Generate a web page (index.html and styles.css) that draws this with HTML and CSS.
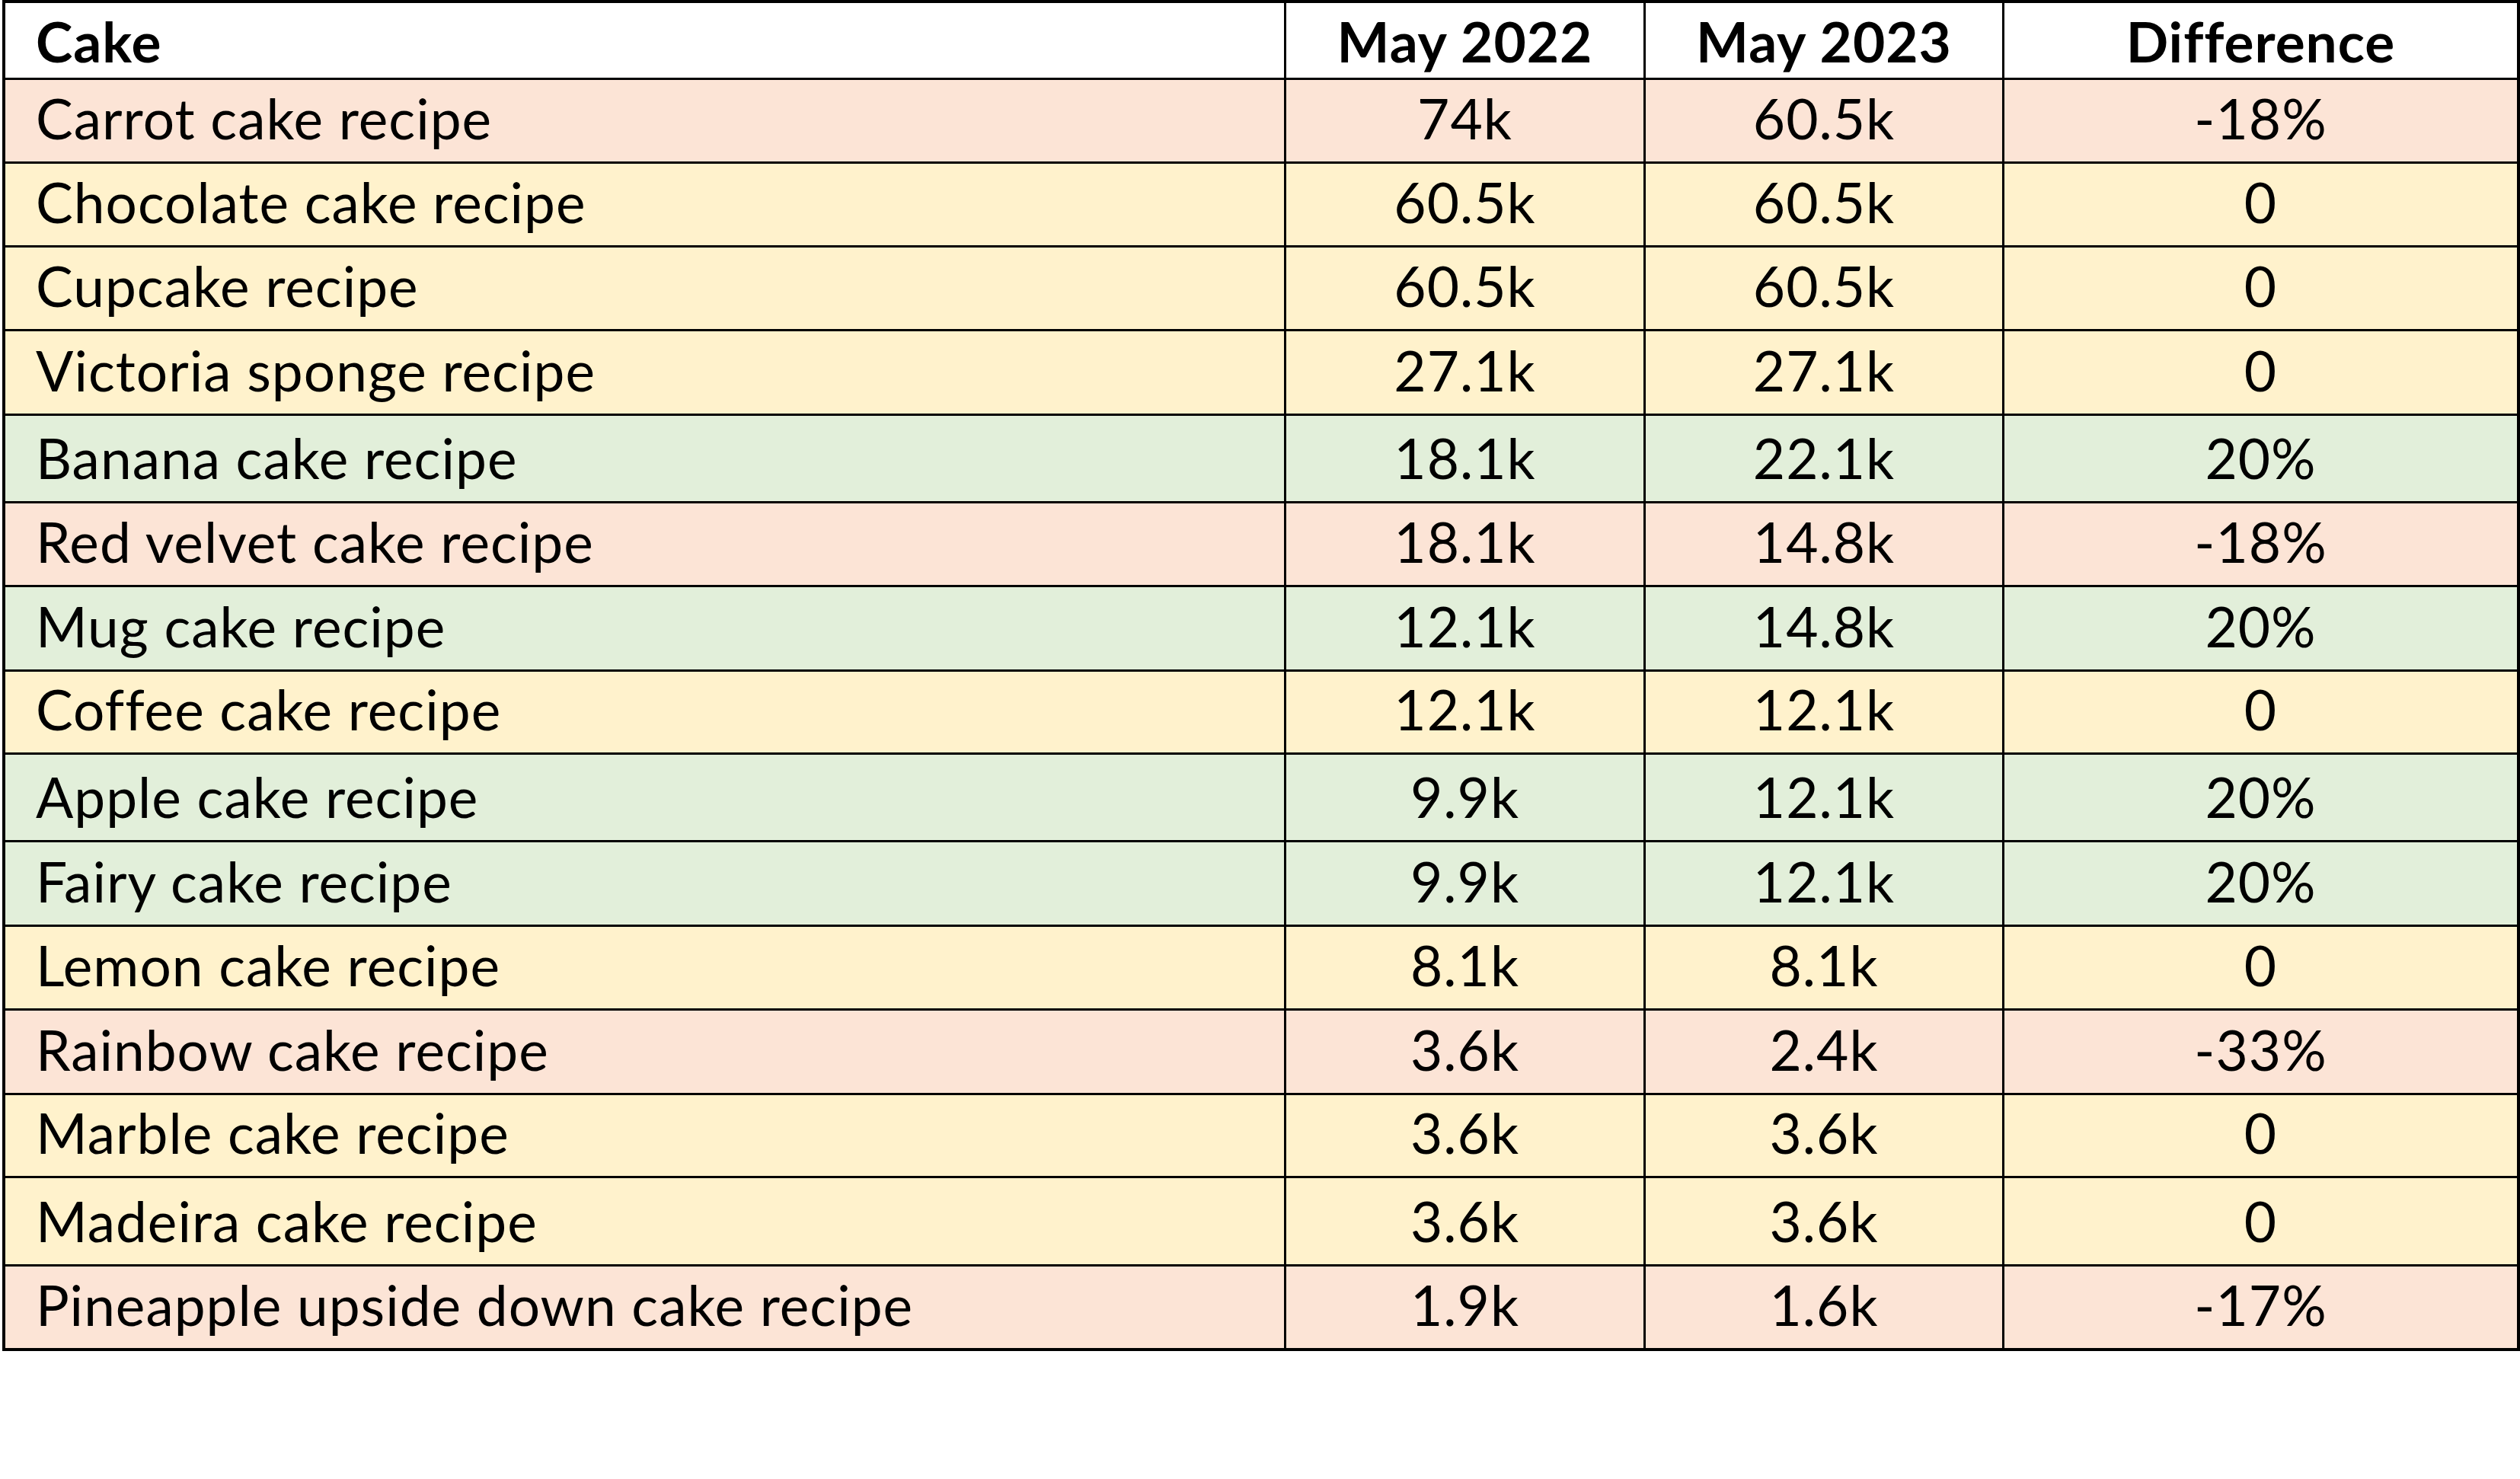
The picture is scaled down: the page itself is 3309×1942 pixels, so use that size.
FILE: index.html
```html
<!DOCTYPE html>
<html lang="en">
<head>
<meta charset="utf-8">
<title>Cake recipe searches</title>
<link rel="stylesheet" href="styles.css">
</head>
<body>
<div class="page">
  <div class="sheet" role="table">
    <div class="row head" role="row">
      <div class="cell name" role="columnheader">Cake</div>
      <div class="cell num" role="columnheader">May 2022</div>
      <div class="cell num" role="columnheader">May 2023</div>
      <div class="cell num" role="columnheader">Difference</div>
    </div>
    <div class="row pink r1" role="row"><div class="cell name">Carrot cake recipe</div><div class="cell num">74k</div><div class="cell num">60.5k</div><div class="cell num">-18%</div></div>
    <div class="row yellow r2" role="row"><div class="cell name">Chocolate cake recipe</div><div class="cell num">60.5k</div><div class="cell num">60.5k</div><div class="cell num">0</div></div>
    <div class="row yellow r3" role="row"><div class="cell name">Cupcake recipe</div><div class="cell num">60.5k</div><div class="cell num">60.5k</div><div class="cell num">0</div></div>
    <div class="row yellow r4" role="row"><div class="cell name">Victoria sponge recipe</div><div class="cell num">27.1k</div><div class="cell num">27.1k</div><div class="cell num">0</div></div>
    <div class="row green r5" role="row"><div class="cell name">Banana cake recipe</div><div class="cell num">18.1k</div><div class="cell num">22.1k</div><div class="cell num">20%</div></div>
    <div class="row pink r6" role="row"><div class="cell name">Red velvet cake recipe</div><div class="cell num">18.1k</div><div class="cell num">14.8k</div><div class="cell num">-18%</div></div>
    <div class="row green r7" role="row"><div class="cell name">Mug cake recipe</div><div class="cell num">12.1k</div><div class="cell num">14.8k</div><div class="cell num">20%</div></div>
    <div class="row yellow r8" role="row"><div class="cell name">Coffee cake recipe</div><div class="cell num">12.1k</div><div class="cell num">12.1k</div><div class="cell num">0</div></div>
    <div class="row green r9" role="row"><div class="cell name">Apple cake recipe</div><div class="cell num">9.9k</div><div class="cell num">12.1k</div><div class="cell num">20%</div></div>
    <div class="row green r10" role="row"><div class="cell name">Fairy cake recipe</div><div class="cell num">9.9k</div><div class="cell num">12.1k</div><div class="cell num">20%</div></div>
    <div class="row yellow r11" role="row"><div class="cell name">Lemon cake recipe</div><div class="cell num">8.1k</div><div class="cell num">8.1k</div><div class="cell num">0</div></div>
    <div class="row pink r12" role="row"><div class="cell name">Rainbow cake recipe</div><div class="cell num">3.6k</div><div class="cell num">2.4k</div><div class="cell num">-33%</div></div>
    <div class="row yellow r13" role="row"><div class="cell name">Marble cake recipe</div><div class="cell num">3.6k</div><div class="cell num">3.6k</div><div class="cell num">0</div></div>
    <div class="row yellow r14" role="row"><div class="cell name">Madeira cake recipe</div><div class="cell num">3.6k</div><div class="cell num">3.6k</div><div class="cell num">0</div></div>
    <div class="row pink r15" role="row"><div class="cell name">Pineapple upside down cake recipe</div><div class="cell num">1.9k</div><div class="cell num">1.6k</div><div class="cell num">-17%</div></div>
  </div>
</div>
</body>
</html>
```

FILE: styles.css
```css
html, body {
  margin: 0;
  padding: 0;
  background: #ffffff;
}

.page {
  padding: 0 0 0 3px;
  font-family: "Lato", "Open Sans", sans-serif;
  color: #000000;
}

.sheet {
  display: flex;
  flex-direction: column;
  gap: 3px;
  width: 3306px;
  box-sizing: border-box;
  padding: 4px;
  background: #000000;
}

.row {
  display: grid;
  grid-template-columns: 1679px 469px 468px 673px;
  column-gap: 3px;
  height: 107px;
}

.cell {
  display: flex;
  align-items: flex-end;
  box-sizing: border-box;
  font-size: 73px;
  line-height: 1;
  letter-spacing: 1px;
  padding-bottom: 20px;
  white-space: nowrap;
}

.name {
  padding-left: 40px;
}

.num {
  justify-content: center;
}

.head {
  height: 98px;
}

.head .cell {
  background: #ffffff;
  font-weight: 700;
  padding-bottom: 11px;
}

.pink .cell { background: #fce4d6; }
.yellow .cell { background: #fff2cc; }
.green .cell { background: #e2efda; }

.r4 { height: 108px; }
.r5 { height: 112px; }
.r7 { height: 108px; }
.r8 { height: 106px; }
.r9 { height: 112px; }
.r10 { height: 108px; }
.r12 { height: 108px; }
.r13 { height: 106px; }
.r14 { height: 113px; }
```
